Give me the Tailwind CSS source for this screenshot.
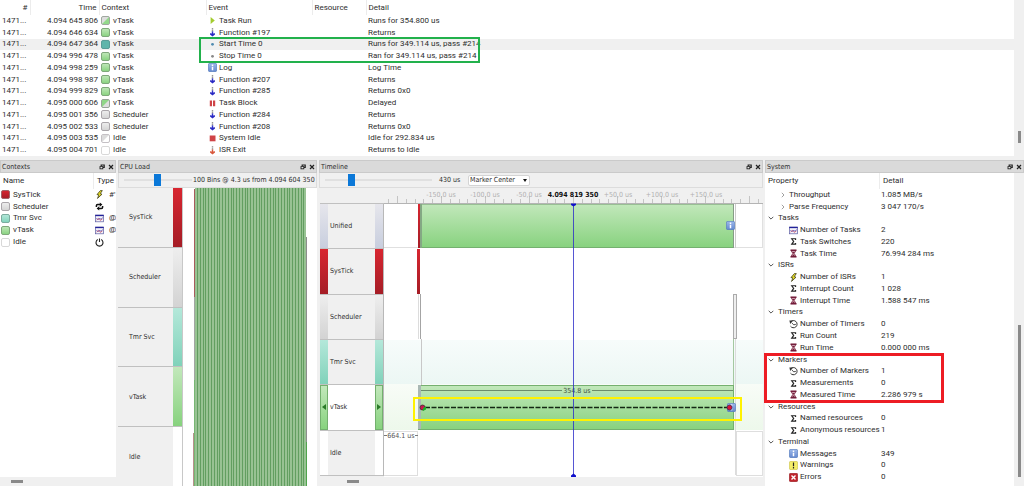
<!DOCTYPE html>
<html lang="en">
<head>
<meta charset="utf-8">
<title>Trace viewer</title>
<script src="https://cdn.jsdelivr.net/npm/@tailwindcss/browser@4"></script>
</head>
<body class="bg-[#f0f0f0] text-[#2e2e2e] font-['Roboto','Noto_Sans',sans-serif] text-[8px] leading-[10px]">
<svg width="0" height="0" class="absolute" aria-hidden="true">
  <defs>
    <linearGradient id="gRed" x1="0" y1="0" x2="0" y2="1"><stop offset="0" stop-color="#d82630"/><stop offset="1" stop-color="#a51d26"/></linearGradient>
    <linearGradient id="gGrey" x1="0" y1="0" x2="0" y2="1"><stop offset="0" stop-color="#eeeeee"/><stop offset="1" stop-color="#d3d3d3"/></linearGradient>
    <linearGradient id="gTeal" x1="0" y1="0" x2="0" y2="1"><stop offset="0" stop-color="#b4e8da"/><stop offset="1" stop-color="#80d2ba"/></linearGradient>
    <linearGradient id="gGreen" x1="0" y1="0" x2="0" y2="1"><stop offset="0" stop-color="#c2e8bb"/><stop offset="1" stop-color="#87d27e"/></linearGradient>
    <linearGradient id="gBlue" x1="0" y1="0" x2="0" y2="1"><stop offset="0" stop-color="#9db9ea"/><stop offset="1" stop-color="#6488d0"/></linearGradient>
    <symbol id="sRed" viewBox="0 0 9 9"><rect x=".5" y=".5" width="8" height="8" rx="1.5" fill="url(#gRed)" stroke="#a06468"/></symbol>
    <symbol id="sGrey" viewBox="0 0 9 9"><rect x=".5" y=".5" width="8" height="8" rx="1.5" fill="url(#gGrey)" stroke="#aaa6aa"/></symbol>
    <symbol id="sTeal" viewBox="0 0 9 9"><rect x=".5" y=".5" width="8" height="8" rx="1.5" fill="url(#gTeal)" stroke="#7cac9f"/></symbol>
    <symbol id="sGreen" viewBox="0 0 9 9"><rect x=".5" y=".5" width="8" height="8" rx="1.5" fill="url(#gGreen)" stroke="#80a87c"/></symbol>
    <symbol id="sSel" viewBox="0 0 9 9"><rect x=".5" y=".5" width="8" height="8" rx="1.5" fill="#5fb5ab" stroke="#5a9c98"/></symbol>
    <symbol id="sWhite" viewBox="0 0 9 9"><rect x=".5" y=".5" width="8" height="8" rx="1.5" fill="#fff" stroke="#d8d8d8"/></symbol>
    <symbol id="sIn" viewBox="0 0 9 9"><rect x=".5" y=".5" width="8" height="8" rx="1.5" fill="#dedede" stroke="#a0a8a0"/><path d="M8 1V8H1Z" fill="#93d98b"/></symbol>
    <symbol id="sOut" viewBox="0 0 9 9"><rect x=".5" y=".5" width="8" height="8" rx="1.5" fill="#dedede" stroke="#98a498"/><path d="M1 8V1H8Z" fill="#8fd687"/></symbol>
    <symbol id="sIdle" viewBox="0 0 9 9"><rect x=".5" y=".5" width="8" height="8" rx="1.5" fill="#fff" stroke="#c4c0c4"/><path d="M1 8V1H8Z" fill="#dcdcdc"/></symbol>
    <symbol id="run" viewBox="0 0 9 9"><path d="M2.6 1L6.8 4.5L2.6 8Z" fill="#a3cc2e"/></symbol>
    <symbol id="fn" viewBox="0 0 9 9"><path d="M3.8 .3H5.2V1.6H3.8ZM3.8 2.2H5.2V3.4H3.8Z" fill="#777"/><path d="M4.500 3.400V6" stroke="#33c" stroke-width="1.400"/><path d="M2 5.200L3.800 5.600H5.200L7 5.200V6.600L4.500 8.600L2 6.600Z" fill="#2a2ac4"/></symbol>
    <symbol id="isr" viewBox="0 0 9 9"><path d="M3.8 .3H5.2V1.6H3.8ZM3.8 2.2H5.2V3.4H3.8Z" fill="#888"/><path d="M4.500 3.400V6" stroke="#d8583c" stroke-width="1.400"/><path d="M2 5.200L3.800 5.600H5.200L7 5.200V6.600L4.500 8.600L2 6.600Z" fill="#d8583c"/></symbol>
    <symbol id="dotB" viewBox="0 0 9 9"><circle cx="4.5" cy="4.3" r="1.4" fill="#4f8bb0"/></symbol>
    <symbol id="dotG" viewBox="0 0 9 9"><circle cx="4.5" cy="4.3" r="1.4" fill="#888"/></symbol>
    <symbol id="info" viewBox="0 0 9 9"><rect x=".3" y=".3" width="8.4" height="8.4" rx="1.6" fill="url(#gBlue)" stroke="#557bbb" stroke-width=".7"/><path d="M4.5 1.6V3M4.5 3.8V7.3" stroke="#fff" stroke-width="1.5"/></symbol>
    <symbol id="block" viewBox="0 0 9 9"><path d="M1.8 1.5H4V7.3H1.8ZM5 1.5H7.2V7.3H5Z" fill="#cf4347"/></symbol>
    <symbol id="stop" viewBox="0 0 9 9"><rect x="1.7" y="1.5" width="5.8" height="5.8" fill="#cf4347"/></symbol>
    <symbol id="bolt" viewBox="0 0 9 9"><path d="M5.400 .600L2 4.600L3.900 4.900L2.500 8.400L7 4.200L5.200 3.700L7.300 .600Z" fill="#ece328" stroke="#3c3a18" stroke-width=".8" stroke-linejoin="round"/></symbol>
    <symbol id="cycle" viewBox="0 0 9 9"><path d="M1.4 5V3.7Q1.4 2.6 2.6 2.6H5.2M7.6 4V5.3Q7.6 6.4 6.4 6.4H3.8" fill="none" stroke="#111" stroke-width="1.5"/><path d="M4.8 .5L7.4 2.6L4.8 4.7ZM4.2 4.3L1.6 6.4L4.2 8.5Z" fill="#111"/></symbol>
    <symbol id="task" viewBox="0 0 9 9"><rect x=".6" y="1.1" width="7.8" height="6.7" fill="#f4f4fa" stroke="#5a5aa0" stroke-width=".7"/><path d="M.3 1.5H8.7" stroke="#22229a" stroke-width="1.3"/><path d="M1.5 4.2L3 5.8L4.5 4L6 5.5L7.6 3.5" fill="none" stroke="#3f3fa8" stroke-width=".8"/><path d="M1.5 6L3.4 4.4L5.2 6.4L7.4 5" fill="none" stroke="#d04858" stroke-width=".7"/></symbol>
    <symbol id="power" viewBox="0 0 9 9"><path d="M2.8 1.6A3.5 3.500 0 1 0 6.2 1.6M4.5 .5V4" fill="none" stroke="#222" stroke-width="1.1"/></symbol>
    <symbol id="sum" viewBox="0 0 9 9"><path d="M6.600 3V1.800H2.700L4.700 4.400L2.700 7.100H6.600V5.900" fill="none" stroke="#222" stroke-width="1.100"/></symbol>
    <symbol id="glass" viewBox="0 0 9 9"><path d="M2 1.5H7L5.2 4.4L7 7.5H2L3.8 4.4Z" fill="#c898a8" stroke="#7a2440" stroke-width=".8"/><path d="M1.5 1.1H7.5M1.5 7.9H7.5" stroke="#6c1030" stroke-width="1.3"/><path d="M3.2 3H5.8L4.5 4.6ZM2.9 7.2H6.1L4.5 5.4Z" fill="#74203c"/></symbol>
    <symbol id="clock" viewBox="0 0 9 9"><path d="M1.6 2.8V2A3.600 3.600 0 1 1 1.5 6.2" fill="none" stroke="#333" stroke-width="1"/><path d="M.4 .6H4L1.2 4Z" fill="#333"/><path d="M2.8 3L4.8 4.8L6.8 4.4" fill="none" stroke="#333" stroke-width=".9"/></symbol>
    <symbol id="warn" viewBox="0 0 9 9"><rect x=".3" y=".3" width="8.4" height="8.4" rx="1.6" fill="#f4ee6a" stroke="#c4bb48" stroke-width=".6"/><path d="M4.5 1.5V5.2M4.5 6V7.4" stroke="#222" stroke-width="1.2"/></symbol>
    <symbol id="err" viewBox="0 0 9 9"><rect x=".3" y=".3" width="8.4" height="8.4" rx="1.4" fill="#c0242c" stroke="#901c22" stroke-width=".6"/><path d="M2.5 2.5L6.5 6.5M6.5 2.5L2.5 6.5" stroke="#fff" stroke-width="1.4"/></symbol>
    <symbol id="float" viewBox="0 0 6 6"><path d="M2.200 2V1H5.200V3.400H4" fill="none" stroke="#222" stroke-width="1.200"/><rect x="1" y="2.600" width="2.800" height="2.200" fill="#eee" stroke="#222" stroke-width=".9"/></symbol>
    <symbol id="close" viewBox="0 0 6 6"><path d="M1 1L5 5M5 1L1 5" stroke="#222" stroke-width="1.2"/></symbol>
    <symbol id="down" viewBox="0 0 6 6"><path d="M.7 1.8L3 4.1L5.3 1.8" fill="none" stroke="#444" stroke-width=".9"/></symbol>
    <symbol id="right" viewBox="0 0 6 6"><path d="M1.8 .8L4 3L1.8 5.2" fill="none" stroke="#888" stroke-width=".8"/></symbol>
  </defs>
</svg>

<div class="flex min-h-screen flex-col">
  <!-- Event list -->
  <section class="relative flex" aria-label="Events">
    <div class="grow bg-white">
      <table class="w-full table-fixed border-collapse">
        <colgroup><col class="w-[30px]"><col class="w-[69px]"><col class="w-[107px]"><col class="w-[106px]"><col class="w-[54px]"><col></colgroup>
        <thead>
          <tr class="h-[15px] text-left *:border-r *:border-[#ececec] *:font-normal *:p-0">
            <th class="text-right"><span class="pr-0.5">#</span></th>
            <th class="text-right"><span class="pr-0.5">Time</span></th>
            <th><span class="pl-0.5">Context</span></th>
            <th><span class="pl-0.5">Event</span></th>
            <th><span class="pl-0.5">Resource</span></th>
            <th class="border-r-0!"><span class="pl-0.5">Detail</span></th>
          </tr>
        </thead>
      </table>
      <div id="events" class="grid h-[141px] auto-rows-fr" role="table" aria-label="Event rows"></div>
    </div>
    <div class="flex w-[10px] shrink-0 flex-col items-center"><div class="mt-[131px] h-3 w-[3px] bg-[#8a8a8a]"></div></div>
    <div class="absolute left-[199px] top-[37px] h-[26px] w-[281px] border-2 border-[#22b14c]"></div>
  </section>

  <div class="mt-1 flex grow gap-0.5">
    <!-- Contexts -->
    <section class="flex w-[116px] flex-col overflow-hidden">
      <header class="flex h-[13px] items-center border border-[#cacaca] bg-[#dadada] pl-px font-['DejaVu_Sans_Condensed','DejaVu_Sans',sans-serif] text-[7px]">
        <h2 class="grow">Contexts</h2>
        <button aria-label="Float" class="mr-[3px]"><svg class="size-[6px]"><use href="#float"/></svg></button>
        <button aria-label="Close" class="mr-px"><svg class="size-[6px]"><use href="#close"/></svg></button>
      </header>
      <div class="grow bg-white">
        <div class="flex h-4 items-center"><span class="w-[94px] self-stretch border-r border-[#ececec] pl-[3px] pt-[3px]">Name</span><span class="pl-[3px]">Type</span></div>
        <div id="contexts" class="grid h-[59px] auto-rows-fr"></div>
      </div>
      <div class="flex h-[9px] items-center"><div class="ml-[11px] h-[3px] w-3 bg-[#8a8a8a]"></div></div>
    </section>

    <!-- CPU load -->
    <section class="flex w-[199px] flex-col font-['DejaVu_Sans_Condensed','DejaVu_Sans',sans-serif] text-[7px]">
      <header class="flex h-[13px] items-center border border-[#cacaca] bg-[#dadada] pl-px">
        <h2 class="grow">CPU Load</h2>
        <button aria-label="Float" class="mr-[3px]"><svg class="size-[6px]"><use href="#float"/></svg></button>
        <button aria-label="Close" class="mr-px"><svg class="size-[6px]"><use href="#close"/></svg></button>
      </header>
      <div class="flex h-[15px] items-center border border-t-0 border-[#dcdcdc] pl-[5px]">
        <input type="range" aria-label="Bins" value="49" class="h-[11px] w-[68px] appearance-none bg-transparent [&::-webkit-slider-runnable-track]:h-0.5 [&::-webkit-slider-runnable-track]:bg-[#e0e0e0] [&::-webkit-slider-thumb]:-mt-[5px] [&::-webkit-slider-thumb]:h-3 [&::-webkit-slider-thumb]:w-[7px] [&::-webkit-slider-thumb]:appearance-none [&::-webkit-slider-thumb]:bg-[#0b78d8]">
        <span class="whitespace-nowrap pl-px">100 Bins @ 4.3 us from 4.094 604 350</span>
      </div>
      <div class="flex grow bg-white">
        <div class="flex w-[65px] flex-col border-r border-[#c8c8c8] *:flex *:flex-1 *:items-center *:border-b *:border-[#c0c0c0] *:bg-[#f0f0f0]">
          <div><span class="grow pl-[11px]">SysTick</span><i class="w-[9px] self-stretch bg-linear-to-b from-[#d82630] to-[#a51d26]"></i></div>
          <div><span class="grow pl-[11px]">Scheduler</span><i class="w-[9px] self-stretch bg-linear-to-b from-[#eeeeee] to-[#d3d3d3]"></i></div>
          <div><span class="grow pl-[11px]">Tmr Svc</span><i class="w-[9px] self-stretch bg-linear-to-b from-[#b4e8da] to-[#80d2ba]"></i></div>
          <div><span class="grow pl-[11px]">vTask</span><i class="w-[9px] self-stretch bg-linear-to-b from-[#c2e8bb] to-[#87d27e]"></i></div>
          <div class="border-b-0!"><span class="grow pl-[11px]">Idle</span><i class="w-[9px] self-stretch bg-white"></i></div>
        </div>
        <svg class="h-[298px] w-[134px]" viewBox="183 188 134 298" shape-rendering="crispEdges" role="img" aria-label="CPU load by bin">
          <rect x="194" y="189" width="1" height="108" fill="#a85a5e"/>
          <rect x="194" y="297" width="1" height="83" fill="#a4a4a4"/>
          <rect x="194" y="380" width="1" height="106" fill="#77b673"/>
          <rect x="193" y="433" width="1" height="53" fill="#b8908c"/>
          <rect x="195" y="188" width="111" height="298" fill="#98c293"/>
          <g id="bins" fill="#629e60"></g>
          <rect x="306" y="237" width="1" height="205" fill="#8d8d8d"/>
          <rect x="306" y="442" width="1" height="44" fill="#4fa44c"/>
        </svg>
      </div>
    </section>

    <!-- Timeline -->
    <section class="flex min-w-[444px] flex-1 flex-col font-['DejaVu_Sans_Condensed','DejaVu_Sans',sans-serif] text-[7px]">
      <header class="flex h-[13px] items-center border border-[#cacaca] bg-[#dadada] pl-px">
        <h2 class="grow">Timeline</h2>
        <button aria-label="Float" class="mr-[3px]"><svg class="size-[6px]"><use href="#float"/></svg></button>
        <button aria-label="Close" class="mr-px"><svg class="size-[6px]"><use href="#close"/></svg></button>
      </header>
      <div class="flex h-[15px] items-center border border-t-0 border-[#dcdcdc] pl-[5px]">
        <input type="range" aria-label="Zoom" value="23" class="h-[11px] w-[107px] appearance-none bg-transparent [&::-webkit-slider-runnable-track]:h-0.5 [&::-webkit-slider-runnable-track]:bg-[#e0e0e0] [&::-webkit-slider-thumb]:-mt-[5px] [&::-webkit-slider-thumb]:h-3 [&::-webkit-slider-thumb]:w-[7px] [&::-webkit-slider-thumb]:appearance-none [&::-webkit-slider-thumb]:bg-[#0b78d8]">
        <span class="w-9 pl-[7px]">430 us</span>
        <span class="relative flex">
          <select aria-label="Center mode" class="h-[11px] w-[62px] appearance-none rounded-xs border border-[#d4d4d4] bg-white pl-px leading-[9px]"><option>Marker Center</option></select>
          <svg class="pointer-events-none absolute right-[3px] top-[4px] h-[3px] w-[4px]" viewBox="0 0 4 3"><path d="M0 0H4L2 3Z" fill="#111"/></svg>
        </span>
      </div>
      <div class="flex grow">
        <div class="flex w-[65px] flex-col pl-px">
          <div class="h-4 border-b border-[#c0c0c0]"></div>
          <div class="flex h-[272px] flex-col border-r border-[#b8b8b8] *:flex *:flex-1 *:items-center *:border-b *:border-[#c0c0c0]">
            <div><i class="w-2 self-stretch bg-linear-to-b from-[#e6e6ec] to-[#c8cede]"></i><span class="grow pl-0.5">Unified</span><i class="w-2 self-stretch bg-linear-to-b from-[#e6e6ec] to-[#c8cede]"></i></div>
            <div><i class="w-2 self-stretch bg-linear-to-b from-[#d82630] to-[#a51d26]"></i><span class="grow pl-0.5">SysTick</span><i class="w-2 self-stretch bg-linear-to-b from-[#d82630] to-[#a51d26]"></i></div>
            <div><i class="w-2 self-stretch bg-linear-to-b from-[#eeeeee] to-[#d3d3d3]"></i><span class="grow pl-0.5">Scheduler</span><i class="w-2 self-stretch bg-linear-to-b from-[#eeeeee] to-[#d3d3d3]"></i></div>
            <div><i class="w-2 self-stretch bg-linear-to-b from-[#b4e8da] to-[#80d2ba]"></i><span class="grow pl-0.5">Tmr Svc</span><i class="w-2 self-stretch bg-linear-to-b from-[#b4e8da] to-[#80d2ba]"></i></div>
            <div class="bg-white">
              <button aria-label="Previous" class="flex w-2 items-center justify-center self-stretch border border-[#73b06e] bg-linear-to-b from-[#c2e8bb] to-[#87d27e]"><svg class="h-[6px] w-[4px]" viewBox="0 0 4 6"><path d="M4 0V6L0 3Z" fill="#2a7a28"/></svg></button>
              <span class="grow pl-0.5">vTask</span>
              <button aria-label="Next" class="flex w-2 items-center justify-center self-stretch border border-[#73b06e] bg-linear-to-b from-[#c2e8bb] to-[#87d27e]"><svg class="h-[6px] w-[4px]" viewBox="0 0 4 6"><path d="M0 0V6L4 3Z" fill="#2a7a28"/></svg></button>
            </div>
            <div><i class="w-2 self-stretch bg-white"></i><span class="grow pl-0.5">Idle</span><i class="w-2 self-stretch bg-white"></i></div>
          </div>
        </div>
        <svg class="h-[289px] w-[379px]" viewBox="384 188 379 289" role="img" aria-label="Timeline lanes" font-family="'DejaVu Sans Condensed','DejaVu Sans',sans-serif" font-size="7">
          <rect x="384" y="204" width="379" height="273" fill="#fff"/>
          <g id="ticks" fill="#c4c4c4" shape-rendering="crispEdges"></g>
          <g fill="#b0b0b0" text-anchor="middle">
            <text x="441" y="197">-150,0 us</text><text x="485" y="197">-100,0 us</text><text x="529" y="197">-50,0 us</text>
            <text x="618" y="197">+50,0 us</text><text x="662" y="197">+100,0 us</text><text x="706" y="197">+150,0 us</text>
            <text x="573" y="197" fill="#111" font-weight="bold">4.094 819 350</text>
          </g>
          <g shape-rendering="crispEdges">
            <rect x="384" y="203" width="379" height="1" fill="#b4b4b4"/>
            <rect x="384" y="340" width="379" height="44" fill="url(#tintTeal)"/>
            <rect x="384" y="384" width="379" height="46" fill="url(#tintGreen)"/>
            <rect x="384" y="247" width="379" height="1" fill="#e0e0e0"/>
            <rect x="418" y="204" width="2" height="44" fill="url(#gRed)"/>
            <rect x="420" y="204" width="2" height="44" fill="#84a884"/>
            <rect x="422" y="204" width="312" height="44" fill="url(#gGreen)"/>
            <rect x="422" y="204" width="312" height="1" fill="#98bf94"/>
            <rect x="422" y="247" width="312" height="1" fill="#74b06f"/>
            <rect x="733" y="204" width="1" height="44" fill="#869c86"/>
            <rect x="735" y="204" width="1" height="44" fill="#cccccc"/>
            <rect x="417" y="249" width="3" height="45" fill="url(#gRed)"/>
            <rect x="418" y="294" width="1" height="45" fill="#dcdcdc"/>
            <rect x="420" y="294" width="1" height="45" fill="#a4a4a4"/>
            <rect x="421" y="339" width="1" height="46" fill="#c8c8c8"/>
            <rect x="733" y="294" width="3" height="45" fill="#e4e4e4"/>
            <path d="M733.500 338.500V294.500H736.500V338.500Z" fill="#eee" stroke="#ababab"/>
            <rect x="733" y="339" width="1" height="46" fill="#a4c8a0"/>
            <rect x="735" y="339" width="1" height="136" fill="#dcdcdc"/>
            <rect x="418" y="385" width="3" height="45" fill="#a9b8b4"/>
            <rect x="421" y="385" width="313" height="45" fill="url(#gGreen)"/>
            <path d="M421 385.500H733.500V429.500H418" fill="none" stroke="#74b06f"/>
            <path d="M421 390.500H562M592 390.500H733" stroke="#6c8c69"/>
            <path d="M384 431.500H417.500V475.500H384M763 431.500H736.500V475.500H763" fill="none" stroke="#dedede"/>
            <path d="M384 435.500H387M415 435.500H418" stroke="#777"/>
            <rect x="762" y="204" width="1" height="44" fill="#e0e0e0"/>
            <rect x="762" y="431" width="1" height="45" fill="#e0e0e0"/>
          </g>
          <text x="577" y="393" text-anchor="middle" fill="#42523f">354.8 us</text>
          <text x="401" y="438" text-anchor="middle" fill="#555">664.1 us</text>
          <use href="#info" x="726" y="221" width="9" height="9"/>
          <use href="#info" x="727" y="403" width="9" height="9"/>
          <path d="M425 407.500H729" stroke="#142814" stroke-width="1.400" stroke-dasharray="5 1.500"/>
          <circle cx="422.500" cy="407.500" r="2.500" fill="#c8184c" stroke="#3c2c30" stroke-width=".8"/>
          <path d="M423 408L426 406.500V409.500L423 411Z" fill="#14b424"/>
          <circle cx="729.500" cy="407.500" r="2.500" fill="#dc1438" stroke="#3c2c50" stroke-width=".8"/>
          <rect x="573" y="204" width="1" height="272" fill="#2c2cc8" fill-opacity=".8" shape-rendering="crispEdges"/>
          <path d="M571 203.500H576V205L573.500 206.500L571 205ZM571 477V475.500L573.500 473.500L576 475.500V477Z" fill="#1010cc"/>
          <rect x="414" y="398" width="327" height="22" fill="none" stroke="#fff200" stroke-width="2"/>
          <defs>
            <linearGradient id="tintTeal" x1="0" y1="0" x2="0" y2="1"><stop offset="0" stop-color="#f7fcfb"/><stop offset="1" stop-color="#ecf7f4"/></linearGradient>
            <linearGradient id="tintGreen" x1="0" y1="0" x2="0" y2="1"><stop offset="0" stop-color="#f8fcf7"/><stop offset="1" stop-color="#edf8eb"/></linearGradient>
          </defs>
        </svg>
      </div>
      <div class="flex h-[9px] items-center"><div class="ml-7 h-[3px] w-3 bg-[#8a8a8a]"></div></div>
    </section>

    <!-- System -->
    <section class="relative flex w-[259px] flex-col">
      <header class="flex h-[13px] items-center border border-[#cacaca] bg-[#dadada] pl-px font-['DejaVu_Sans_Condensed','DejaVu_Sans',sans-serif] text-[7px]">
        <h2 class="grow">System</h2>
        <button aria-label="Float" class="mr-[3px]"><svg class="size-[6px]"><use href="#float"/></svg></button>
        <button aria-label="Close" class="mr-px"><svg class="size-[6px]"><use href="#close"/></svg></button>
      </header>
      <div class="flex grow">
        <div class="grow bg-white">
          <div class="flex h-4 items-center"><span class="w-[115px] self-stretch border-r border-[#ececec] pl-[3px] pt-[3px]">Property</span><span class="pl-[3px]">Detail</span></div>
          <div id="system" class="grid h-[294px] auto-rows-fr"></div>
        </div>
        <div class="flex w-[10px] shrink-0 flex-col items-center"><div class="mt-[152px] h-[152px] w-[3px] bg-[#8a8a8a]"></div></div>
      </div>
      <div class="absolute -left-px top-[193px] h-[50px] w-[180px] border-[3px] border-[#ed1c24]"></div>
    </section>
  </div>
</div>

<script>
const icon = id => `<svg class="size-[9px] shrink-0" aria-hidden="true"><use href="#${id}"/></svg>`;
const events = [
  ['4.094 645 806','sIn','vTask','run','Task Run','Runs for 354.800 us'],
  ['4.094 646 634','sGreen','vTask','fn','Function #197','Returns'],
  ['4.094 647 364','sSel','vTask','dotB','Start Time 0','Runs for 349.114 us, pass #214'],
  ['4.094 996 478','sGreen','vTask','dotG','Stop Time 0','Ran for 349.114 us, pass #214'],
  ['4.094 998 259','sGreen','vTask','info','Log','Log Time'],
  ['4.094 998 987','sGreen','vTask','fn','Function #207','Returns'],
  ['4.094 999 829','sGreen','vTask','fn','Function #285','Returns 0x0'],
  ['4.095 000 606','sOut','vTask','block','Task Block','Delayed'],
  ['4.095 001 356','sGrey','Scheduler','fn','Function #284','Returns'],
  ['4.095 002 533','sGrey','Scheduler','fn','Function #208','Returns 0x0'],
  ['4.095 003 535','sIdle','Idle','stop','System Idle','Idle for 292.834 us'],
  ['4.095 004 701','sWhite','Idle','isr','ISR Exit','Returns to Idle'],
];
document.getElementById('events').innerHTML = events.map((e, i) => `
  <div role="row" class="flex min-h-0 items-center ${i === 2 ? 'bg-[#f0f0f0]' : ''}">
    <span role="cell" class="w-[30px] pl-0.5">1471...</span>
    <span role="cell" class="w-[69px] pr-px text-right">${e[0]}</span>
    <span role="cell" class="flex w-[109px] items-center gap-[3px] pl-0.5">${icon(e[1])}${e[2]}</span>
    <span role="cell" class="flex w-[160px] items-center gap-0.5">${icon(e[3])}${e[4]}</span>
    <span role="cell">${e[5]}</span>
  </div>`).join('');

const contexts = [['sRed','SysTick','bolt',"#'"],['sGrey','Scheduler','cycle',''],['sTeal','Tmr Svc','task','@'],['sGreen','vTask','task','@'],['sWhite','Idle','power','']];
document.getElementById('contexts').innerHTML = contexts.map(c => `
  <div class="flex min-h-0 items-center pl-px"><span class="flex w-[94px] items-center gap-[3px]">${icon(c[0])}${c[1]}</span>${icon(c[2])}<span class="pl-[5px]">${c[3]}</span></div>`).join('');

const system = [
  ['>','Throughput','1.085 MB/s'],['>','Parse Frequency','3 047 170/s'],
  ['v','Tasks'],['task','Number of Tasks','2'],['sum','Task Switches','220'],['glass','Task Time','76.994 284 ms'],
  ['v','ISRs'],['bolt','Number of ISRs','1'],['sum','Interrupt Count','1 028'],['glass','Interrupt Time','1.588 547 ms'],
  ['v','Timers'],['clock','Number of Timers','0'],['sum','Run Count','219'],['glass','Run Time','0.000 000 ms'],
  ['v','Markers'],['clock','Number of Markers','1'],['sum','Measurements','0'],['glass','Measured Time','2.286 979 s'],
  ['v','Resources'],['sum','Named resources','0'],['sum','Anonymous resources','1'],
  ['v','Terminal'],['info','Messages','349'],['warn','Warnings','0'],['err','Errors','0'],
];
document.getElementById('system').innerHTML = system.map(([k, n, d]) => {
  if (k === 'v') return `<div class="flex min-h-0 items-center gap-1 pl-[3px]"><svg class="size-[6px]"><use href="#down"/></svg>${n}</div>`;
  const lead = k === '>'
    ? `<span class="flex w-[116px] shrink-0 items-center gap-[3px] whitespace-nowrap pl-[15px]"><svg class="size-[6px]"><use href="#right"/></svg>${n}</span>`
    : `<span class="flex w-[116px] shrink-0 items-center gap-0.5 whitespace-nowrap pl-6">${icon(k)}${n}</span>`;
  return `<div class="flex min-h-0 items-center">${lead}<span>${d}</span></div>`;
}).join('');

let ticks = '';
for (let i = -21; i <= 21; i++) {
  const x = Math.round(573 + i * 8.8), major = i % 5 === 0;
  ticks += `<rect x="${x}" y="${major ? 196 : 199}" width="1" height="${major ? 7 : 4}"/>`;
}
document.getElementById('ticks').innerHTML = ticks;

let bins = '';
for (let i = 0; i < 39; i++) bins += `<rect x="${Math.round(197 + i * 2.8)}" y="188" width="1" height="298"/>`;
document.getElementById('bins').innerHTML = bins;
</script>
</body>
</html>
